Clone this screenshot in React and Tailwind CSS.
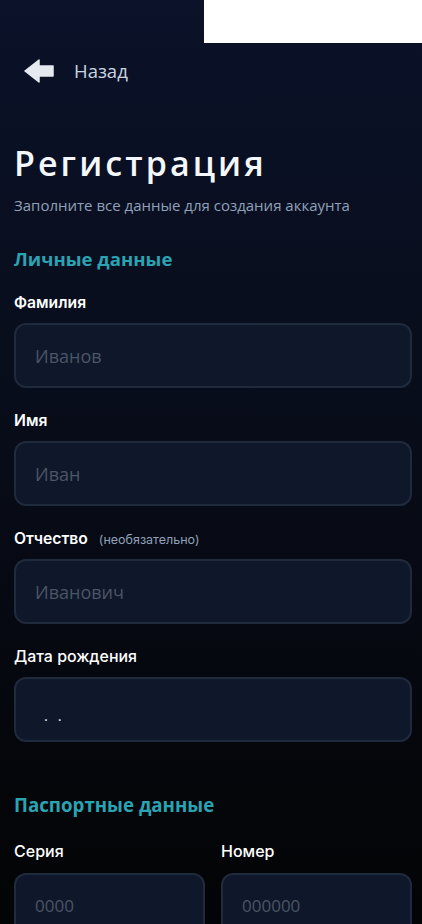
export default function App() {
  const fields = [
    { label: 'Фамилия', placeholder: 'Иванов' },
    { label: 'Имя', placeholder: 'Иван' },
    { label: 'Отчество', placeholder: 'Иванович', hint: '(необязательно)' },
  ];

  return (
    <div className="min-h-screen bg-gradient-to-b from-[#0b1229] via-[#080c18] to-[#030405] font-['Open_Sans',sans-serif] text-slate-100">
      <div className="flex justify-end">
        <div className="w-[218px] h-[43px] bg-white" />
      </div>

      <div className="pl-[14px] pr-[10px]">
        <button className="flex items-center gap-5 pl-[10px] mt-[13px] h-[30px]">
          <svg width="30" height="24" viewBox="0 0 30 24">
            <polygon
              points="1,12 15,1 15,7 29,7 29,17 15,17 15,23"
              fill="#e5e9f0"
              stroke="#e5e9f0"
              strokeWidth="1.5"
              strokeLinejoin="round"
            />
          </svg>
          <span className="text-[18.5px] text-slate-300">Назад</span>
        </button>

        <h1 className="mt-[55px] text-[34px] font-semibold tracking-[0.09em] leading-[44px] text-[#f4f7fb]">Регистрация</h1>
        <p className="mt-[9px] text-[15px] text-slate-400 leading-[22px]">Заполните все данные для создания аккаунта</p>

        <h2 className="mt-[30px] text-[18.6px] font-bold text-[#2aa3b3] leading-[26px]">Личные данные</h2>

        <div className="mt-[21px] flex flex-col gap-[23px]">
          {fields.map((f) => (
            <div key={f.label}>
              <div className="flex items-baseline gap-[11px] h-[20px] mb-[10px]">
                <span className="font-['Inter',sans-serif] text-[15.7px] font-semibold text-white leading-[20px]">{f.label}</span>
                {f.hint && <span className="font-['Inter',sans-serif] text-[12.5px] text-slate-400">{f.hint}</span>}
              </div>
              <input
                placeholder={f.placeholder}
                className="w-full h-[65px] rounded-xl border-2 border-[#1f2a3c] bg-[#0f172a] px-[19px] text-[18px] text-slate-200 placeholder:text-[#4a5565] outline-none"
              />
            </div>
          ))}
          <div>
            <div className="h-[20px] mb-[10px] flex items-baseline">
              <span className="font-['Inter',sans-serif] text-[15.9px] font-medium text-white leading-[20px]">Дата рождения</span>
            </div>
            <div className="w-full h-[65px] rounded-xl border-2 border-[#1f2a3c] bg-[#0f172a] px-[28px] flex items-center">
              <span className="text-[15px] text-slate-200 tracking-[0.65em] pt-[12px]">..</span>
            </div>
          </div>
        </div>

        <h2 className="mt-[50px] text-[18.7px] font-bold text-[#2aa3b3] leading-[26px]">Паспортные данные</h2>

        <div className="mt-[23px] grid grid-cols-2 gap-[16px]">
          {[
            { label: 'Серия', placeholder: '0000' },
            { label: 'Номер', placeholder: '000000' },
          ].map((f) => (
            <div key={f.label}>
              <div className="h-[20px] mb-[12px] flex items-baseline">
                <span className="font-['Inter',sans-serif] text-[16px] font-medium text-white leading-[20px]">{f.label}</span>
              </div>
              <input
                placeholder={f.placeholder}
                className="w-full h-[65px] rounded-xl border-2 border-[#1f2a3c] bg-[#0f172a] px-[19px] text-[17px] text-slate-200 placeholder:text-[#4a5565] outline-none"
              />
            </div>
          ))}
        </div>
      </div>
    </div>
  );
}
